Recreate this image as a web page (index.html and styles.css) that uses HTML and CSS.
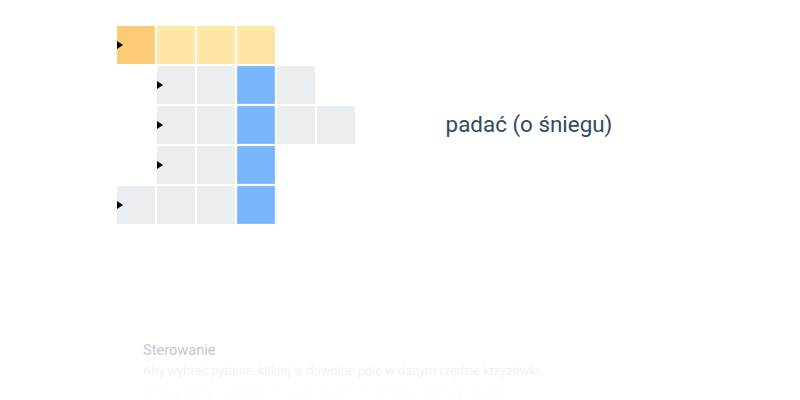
FILE: index.html
```html
<!DOCTYPE html>
<html lang="pl">
<head>
    <meta charset="UTF-8">
    <title>Krzyżówka</title>
    <link rel="stylesheet" href="styles.css">
</head>
<body>
    <div class="puzzle">
        <div class="grid">
            <!-- rząd 1 -->
            <div class="cell active start"></div>
            <div class="cell word"></div>
            <div class="cell word"></div>
            <div class="cell word"></div>
            <div class="blank"></div>
            <div class="blank"></div>
            <!-- rząd 2 -->
            <div class="blank"></div>
            <div class="cell start"></div>
            <div class="cell"></div>
            <div class="cell key"></div>
            <div class="cell"></div>
            <div class="blank"></div>
            <!-- rząd 3 -->
            <div class="blank"></div>
            <div class="cell start"></div>
            <div class="cell"></div>
            <div class="cell key"></div>
            <div class="cell"></div>
            <div class="cell"></div>
            <!-- rząd 4 -->
            <div class="blank"></div>
            <div class="cell start"></div>
            <div class="cell"></div>
            <div class="cell key"></div>
            <div class="blank"></div>
            <div class="blank"></div>
            <!-- rząd 5 -->
            <div class="cell start"></div>
            <div class="cell"></div>
            <div class="cell"></div>
            <div class="cell key"></div>
            <div class="blank"></div>
            <div class="blank"></div>
        </div>
        <div class="clue">
            <p>padać (o śniegu)</p>
        </div>
    </div>
    <div class="controls">
        <h3>Sterowanie</h3>
        <p class="line1">Aby wybrać pytanie, kliknij w dowolne pole w danym rzędzie krzyżówki.</p>
        <p class="line2">Wpisuj litery z klawiatury, a strzałkami przechodź między polami.</p>
    </div>
</body>
</html>
```

FILE: styles.css
```css
body {
    font-family: Roboto, 'Noto Sans', sans-serif;
    margin: 0;
    padding: 0;
    background-color: #ffffff;
}

.puzzle {
    display: flex;
    padding: 26px 97px 0 117px;
}

.grid {
    display: grid;
    grid-template-columns: repeat(6, 38px);
    grid-auto-rows: 38px;
    gap: 2px;
}

.cell {
    position: relative;
    background-color: #ebeef0;
    box-sizing: border-box;
}

.cell.word {
    background-color: #ffe6a6;
}

.cell.active {
    background-color: #fdca76;
}

.cell.key {
    background-color: #78b5fd;
    border: 1px solid #8cc0fd;
}

/* strzałka na początku rzędu */
.cell.start::before {
    content: "";
    position: absolute;
    left: 0;
    top: 15px;
    border-top: 4.5px solid transparent;
    border-bottom: 4.5px solid transparent;
    border-left: 6px solid #000000;
}

.clue {
    flex: 1;
    display: flex;
    align-items: center;
    justify-content: center;
}

.clue p {
    margin: 0 0 2px;
    font-size: 22.4px;
    color: #34495e;
}

.controls {
    padding: 117px 0 0 143px;
}

.controls h3 {
    margin: 0;
    font-size: 14.6px;
    font-weight: normal;
    color: #c3c8d0;
}

.controls p {
    margin: 4px 0 0;
    font-size: 12.75px;
}

.controls .line1 {
    color: #f2f3f5;
}

.controls .line2 {
    margin-top: 6px;
    color: #fdfdfe;
}
```
